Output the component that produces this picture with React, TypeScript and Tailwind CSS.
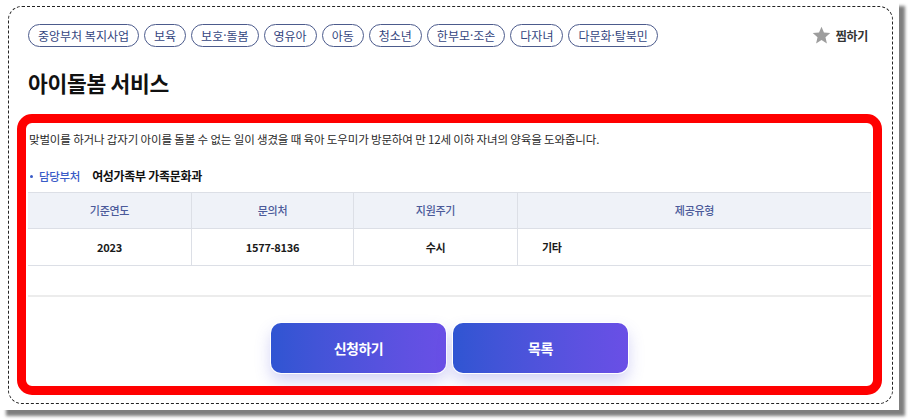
import React from "react";

const tags = ["중앙부처 복지사업", "보육", "보호·돌봄", "영유아", "아동", "청소년", "한부모·조손", "다자녀", "다문화·탈북민"];

const heads = ["기준연도", "문의처", "지원주기", "제공유형"];

function StarIcon() {
  return (
    <svg width="21" height="21" viewBox="0 0 24 24" className="shrink-0">
      <path
        d="M12 17.27L18.18 21l-1.64-7.03L22 9.24l-7.19-.61L12 2 9.19 8.63 2 9.24l5.46 4.73L5.82 21z"
        fill="#9d9d9d"
      />
    </svg>
  );
}

// the CJK font draws "·" full width, so the dot gets a latin face
function TagText({ text }: { text: string }) {
  const parts = text.split("·");
  return (
    <>
      {parts.map((p, i) => (
        <React.Fragment key={i}>
          {i > 0 && <span className="font-['Noto_Sans',sans-serif]">·</span>}
          {p}
        </React.Fragment>
      ))}
    </>
  );
}

export default function App() {
  return (
    <div className="h-[420px] w-[908px] bg-white font-['Noto_Sans_CJK_KR','Noto_Sans',sans-serif] text-[#222]">
      <div className="h-[410px] w-[899px] bg-white pl-[8px] pt-[6px] shadow-[6px_6px_3px_rgba(0,0,0,0.5)]">
        <div className="h-[398px] w-[885px] rounded-[14px] border border-dashed border-[#222] pl-[8px] pr-[10px]">
          {/* header */}
          <div className="px-[11px] pt-[17px]">
            <div className="flex items-center justify-between">
              <div className="flex gap-[5px]">
                {tags.map((t) => (
                  <span
                    key={t}
                    className="flex h-[23px] items-center rounded-full border border-[#4c5b8c] px-[9px] text-[12px] leading-[16px] text-[#34467e]"
                  >
                    <TagText text={t} />
                  </span>
                ))}
              </div>
              <button className="mr-[3px] flex items-center gap-[4px] text-[12px] font-bold leading-[16px] tracking-[-0.3px] text-[#333]">
                <StarIcon />
                찜하기
              </button>
            </div>
            <h1 className="mt-[22px] text-[21.5px] font-bold leading-[28px] tracking-[-0.3px] text-[#111]">
              아이돌봄 서비스
            </h1>
          </div>

          {/* highlighted panel */}
          <div className="mt-[17px] h-[281px] rounded-[15px] border-[9px] border-[#ff0000] pl-[2px] pr-[2px] pt-[8px]">
            <p className="pl-[1px] text-[11.5px] leading-[16px] tracking-[-0.15px] text-[#2a2a2a]">
              맞벌이를 하거나 갑자기 아이를 돌볼 수 없는 일이 생겼을 때 육아 도우미가 방문하여 만 12세 이하 자녀의 양육을 도와줍니다.
            </p>
            <div className="mt-[21px] flex items-center leading-[16px]">
              <span className="ml-[2px] h-[3px] w-[3px] rounded-full bg-[#3a5bc7]" />
              <span className="ml-[6px] text-[11.5px] font-medium tracking-[-0.3px] text-[#3a5bc7]">담당부처</span>
              <span className="ml-[12px] text-[12px] font-semibold tracking-[-0.3px] text-[#111]">여성가족부 가족문화과</span>
            </div>

            <div className="mt-[8px] border-t border-[#dcdfe6]">
              <div className="grid h-[36px] grid-cols-[164px_162px_164px_1fr] border-b border-[#dcdfe6] bg-[#eff2f8]">
                {heads.map((h, i) => (
                  <div
                    key={h}
                    className={
                      i < 3
                        ? "flex items-center justify-center border-r border-[#dcdfe6] text-[11px] font-medium tracking-[-0.3px] text-[#4b5a9a]"
                        : "flex items-center justify-center text-[11px] font-medium tracking-[-0.3px] text-[#4b5a9a]"
                    }
                  >
                    {h}
                  </div>
                ))}
              </div>
              <div className="grid h-[37px] grid-cols-[164px_162px_164px_1fr] border-b border-[#dcdfe6] text-[11px] font-semibold tracking-[-0.3px] text-[#1a1a1a]">
                <div className="flex items-center justify-center border-r border-[#dcdfe6]">2023</div>
                <div className="flex items-center justify-center border-r border-[#dcdfe6]">1577-8136</div>
                <div className="flex items-center justify-center border-r border-[#dcdfe6]">수시</div>
                <div className="flex items-center pl-[24px]">기타</div>
              </div>
              <div className="h-[31px] border-b-2 border-[#ececec]" />
            </div>

            <div className="mt-[26px] flex justify-center gap-[7px]">
              <button className="h-[50px] w-[175px] rounded-[10px] bg-linear-to-r from-[#2f55d2] to-[#6a4fe6] text-[14px] font-bold tracking-[-0.5px] text-white shadow-[0_0_0_1px_#fff,0_8px_16px_rgba(90,90,220,0.28)]">
                신청하기
              </button>
              <button className="h-[50px] w-[175px] rounded-[10px] bg-linear-to-r from-[#2f55d2] to-[#6a4fe6] text-[14px] font-bold tracking-[-0.5px] text-white shadow-[0_0_0_1px_#fff,0_8px_16px_rgba(90,90,220,0.28)]">
                목록
              </button>
            </div>
          </div>
        </div>
      </div>
    </div>
  );
}
